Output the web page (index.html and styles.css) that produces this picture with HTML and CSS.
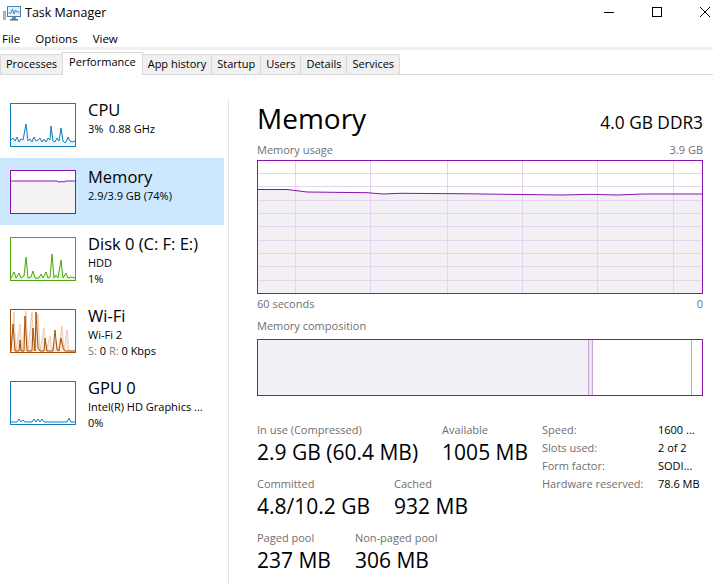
FILE: index.html
```html
<!DOCTYPE html>
<html>
<head>
<meta charset="utf-8">
<title>Task Manager</title>
<link rel="stylesheet" href="styles.css">
</head>
<body>
<div class="window">
  <div class="titlebar">
    <svg class="app-icon" width="18" height="16" viewBox="0 0 18 16">
      <rect x="0.5" y="6.5" width="2" height="8" fill="#b9b9b9" stroke="#8a8a8a" stroke-width="0.6"/>
      <rect x="4.5" y="1.5" width="13" height="10" fill="#e6f2fb" stroke="#4a7fb0"/>
      <polyline points="5.5,8 8,8 9.5,4 11,9 12.5,5 14,7 16.5,7" fill="none" stroke="#2a8ad0" stroke-width="1"/>
      <rect x="9" y="12" width="4" height="2" fill="#7d8a96"/>
      <rect x="7" y="14" width="8" height="1.5" fill="#5a6b7a"/>
    </svg>
    <span class="title">Task Manager</span>
    <div class="controls">
      <span class="ctl"><svg width="12" height="12" viewBox="0 0 12 12"><line x1="1" y1="6.5" x2="11" y2="6.5" stroke="#000" stroke-width="1"/></svg></span>
      <span class="ctl"><svg width="12" height="12" viewBox="0 0 12 12"><rect x="1.5" y="1.5" width="9" height="9" fill="none" stroke="#000" stroke-width="1"/></svg></span>
      <span class="ctl"><svg width="12" height="12" viewBox="0 0 12 12"><path d="M1 1 L11 11 M11 1 L1 11" stroke="#000" stroke-width="1"/></svg></span>
    </div>
  </div>
  <div class="menubar">
    <span class="menu-item">File</span>
    <span class="menu-item">Options</span>
    <span class="menu-item">View</span>
  </div>
  <div class="band"></div>
  <div class="tabs">
    <span class="tab">Processes</span>
    <span class="tab tab-active">Performance</span>
    <span class="tab">App history</span>
    <span class="tab">Startup</span>
    <span class="tab">Users</span>
    <span class="tab">Details</span>
    <span class="tab">Services</span>
  </div>
  <div class="main">
    <div class="sidebar">
      <div class="item">
        <div class="thumb thumb-cpu">
          <svg width="64" height="42" viewBox="0 0 64 42">
            <polygon fill="#f1f6fa" points="0,36 2,34 4,37 6,33 8,38 10,35 12,36 15,20 17,37 19,35 21,38 23,33 25,37 27,36 29,34 31,38 33,35 35,38 37,34 39,36 40,22 42,37 44,38 46,34 48,37 50,24 52,37 54,39 56,36 57,33 59,37 61,38 64,37 64,42 0,42"/>
            <polyline fill="none" stroke="#117dbb" stroke-width="1" points="0,36 2,34 4,37 6,33 8,38 10,35 12,36 15,20 17,37 19,35 21,38 23,33 25,37 27,36 29,34 31,38 33,35 35,38 37,34 39,36 40,22 42,37 44,38 46,34 48,37 50,24 52,37 54,39 56,36 57,33 59,37 61,38 64,37"/>
          </svg>
        </div>
        <div class="item-text">
          <div class="item-title">CPU</div>
          <div class="item-sub">3%&nbsp; 0.88 GHz</div>
        </div>
      </div>
      <div class="item item-active">
        <div class="thumb thumb-mem">
          <svg width="64" height="42" viewBox="0 0 64 42">
            <polygon fill="#f4f2f5" points="0,10 46,10 48,11 51,10.5 53,11 55,10 64,10 64,42 0,42"/>
            <polyline fill="none" stroke="#8b12ae" stroke-width="1" points="0,10 46,10 48,11 51,10.5 53,11 55,10 64,10"/>
          </svg>
        </div>
        <div class="item-text">
          <div class="item-title">Memory</div>
          <div class="item-sub">2.9/3.9 GB (74%)</div>
        </div>
      </div>
      <div class="item">
        <div class="thumb thumb-disk">
          <svg width="64" height="42" viewBox="0 0 64 42">
            <polygon fill="#eff7ea" points="0,40 3,34 5,40 8,35 10,40 13,38 15,19 17,40 20,39 22,33 24,40 28,40 30,36 32,40 35,34 37,40 39,39 41,16 43,40 45,37 47,40 50,22 52,40 55,35 57,40 60,39 64,40 64,42 0,42"/>
            <polyline fill="none" stroke="#4da60c" stroke-width="1" points="0,40 3,34 5,40 8,35 10,40 13,38 15,19 17,40 20,39 22,33 24,40 28,40 30,36 32,40 35,34 37,40 39,39 41,16 43,40 45,37 47,40 50,22 52,40 55,35 57,40 60,39 64,40"/>
          </svg>
        </div>
        <div class="item-text">
          <div class="item-title">Disk 0 (C: F: E:)</div>
          <div class="item-sub">HDD</div>
          <div class="item-sub">1%</div>
        </div>
      </div>
      <div class="item">
        <div class="thumb thumb-wifi">
          <svg width="64" height="42" viewBox="0 0 64 42">
            <polygon fill="#f9ebe0" points="0,41 3,2 5,41 9,14 11,41 15,1 17,41 21,2 23,41 27,4 29,41 33,18 35,41 39,26 41,41 45,30 47,41 51,16 53,41 56,20 58,41 64,41 64,42 0,42"/>
            <polyline fill="none" stroke="#e0a57c" stroke-width="1" stroke-dasharray="1 1" points="0,41 3,2 5,41 9,14 11,41 15,1 17,41 21,2 23,41 27,4 29,41 33,18 35,41 39,26 41,41 45,30 47,41 51,16 53,41 56,20 58,41 64,41"/>
            <polyline fill="none" stroke="#a74f01" stroke-width="1" points="0,41 2,14 4,41 8,41 9,30 10,41 13,41 14,6 16,41 21,41 22,18 24,41 25,2 27,38 29,41 33,41 34,28 36,41 42,41 44,20 46,40 48,41 50,28 52,38 54,41 64,41"/>
          </svg>
        </div>
        <div class="item-text">
          <div class="item-title">Wi-Fi</div>
          <div class="item-sub">Wi-Fi 2</div>
          <div class="item-sub"><span class="dim">S:</span> 0 <span class="dim">R:</span> 0 Kbps</div>
        </div>
      </div>
      <div class="item">
        <div class="thumb thumb-gpu">
          <svg width="64" height="42" viewBox="0 0 64 42">
            <polyline fill="none" stroke="#117dbb" stroke-width="1" points="0,40 6,40 8,37 10,40 12,38 14,40 21,40 23,37 25,40 27,37 29,40 31,37 33,40 56,40 58,36 60,40 64,40"/>
          </svg>
        </div>
        <div class="item-text">
          <div class="item-title">GPU 0</div>
          <div class="item-sub">Intel(R) HD Graphics ...</div>
          <div class="item-sub">0%</div>
        </div>
      </div>
    </div>
    <div class="divider"></div>
    <div class="panel">
      <div class="panel-head">
        <span class="panel-title">Memory</span>
        <span class="panel-spec">4.0 GB DDR3</span>
      </div>
      <div class="caption-row">
        <span>Memory usage</span>
        <span>3.9 GB</span>
      </div>
      <svg class="usage-graph" width="446" height="134" viewBox="0 0 446 134" shape-rendering="crispEdges">
        <rect x="0" y="0" width="446" height="134" fill="#ffffff"/>
        <polygon fill="#f2f0f4" shape-rendering="auto" points="0,29.5 30,29.5 50,32 110,32.7 126,34 143,33.3 200,33.7 306,35 333,34.3 360,35 386,34 446,34 446,134 0,134"/>
        <g stroke="#e6d3ef" stroke-width="1">
          <line x1="38.5" y1="0" x2="38.5" y2="134"/>
          <line x1="113.5" y1="0" x2="113.5" y2="134"/>
          <line x1="190.5" y1="0" x2="190.5" y2="134"/>
          <line x1="265.5" y1="0" x2="265.5" y2="134"/>
          <line x1="340.5" y1="0" x2="340.5" y2="134"/>
          <line x1="416.5" y1="0" x2="416.5" y2="134"/>
          <line x1="0" y1="13.5" x2="446" y2="13.5"/>
          <line x1="0" y1="26.5" x2="446" y2="26.5"/>
          <line x1="0" y1="40.5" x2="446" y2="40.5"/>
          <line x1="0" y1="53.5" x2="446" y2="53.5"/>
          <line x1="0" y1="66.5" x2="446" y2="66.5"/>
          <line x1="0" y1="80.5" x2="446" y2="80.5"/>
          <line x1="0" y1="93.5" x2="446" y2="93.5"/>
          <line x1="0" y1="106.5" x2="446" y2="106.5"/>
          <line x1="0" y1="120.5" x2="446" y2="120.5"/>
        </g>
        <polyline fill="none" stroke="#8b12ae" stroke-width="1" shape-rendering="auto" points="0,29.5 30,29.5 50,32 110,32.7 126,34 143,33.3 200,33.7 306,35 333,34.3 360,35 386,34 446,34"/>
        <rect x="0.5" y="0.5" width="445" height="133" fill="none" stroke="#8b12ae" stroke-width="1"/>
      </svg>
      <div class="caption-row caption-axis">
        <span>60 seconds</span>
        <span>0</span>
      </div>
      <div class="caption-row caption-comp">
        <span>Memory composition</span>
      </div>
      <div class="composition">
        <div class="seg seg-inuse" style="width:74.3%"></div>
        <div class="seg seg-modified" style="width:1.2%"></div>
        <div class="seg seg-standby" style="width:22.3%"></div>
        <div class="seg seg-free"></div>
      </div>
      <div class="stats">
        <div class="stats-left">
          <div class="stat-row">
            <div class="stat"><div class="stat-label">In use (Compressed)</div><div class="stat-value">2.9 GB (60.4 MB)</div></div>
            <div class="stat"><div class="stat-label">Available</div><div class="stat-value">1005 MB</div></div>
          </div>
          <div class="stat-row">
            <div class="stat"><div class="stat-label">Committed</div><div class="stat-value">4.8/10.2 GB</div></div>
            <div class="stat"><div class="stat-label">Cached</div><div class="stat-value">932 MB</div></div>
          </div>
          <div class="stat-row">
            <div class="stat"><div class="stat-label">Paged pool</div><div class="stat-value">237 MB</div></div>
            <div class="stat"><div class="stat-label">Non-paged pool</div><div class="stat-value">306 MB</div></div>
          </div>
        </div>
        <div class="stats-right">
          <span class="kv-key">Speed:</span><span class="kv-val">1600 ...</span>
          <span class="kv-key">Slots used:</span><span class="kv-val">2 of 2</span>
          <span class="kv-key">Form factor:</span><span class="kv-val">SODI...</span>
          <span class="kv-key">Hardware reserved:</span><span class="kv-val">78.6 MB</span>
        </div>
      </div>
    </div>
  </div>
</div>
</body>
</html>
```

FILE: styles.css
```css
html, body {
  margin: 0;
  padding: 0;
  background: #ffffff;
}
body {
  font-family: "Segoe UI", "Open Sans", "Noto Sans", sans-serif;
  color: #000000;
  width: 713px;
  height: 585px;
  overflow: hidden;
}
.window {
  width: 713px;
  height: 585px;
  overflow: hidden;
  display: flex;
  flex-direction: column;
}
.titlebar {
  height: 26px;
  display: flex;
  align-items: center;
  flex-shrink: 0;
}
.app-icon {
  margin-left: 3px;
  margin-right: 4px;
  display: block;
}
.title {
  font-size: 12.5px;
  line-height: 16px;
  padding-bottom: 1px;
}
.controls {
  margin-left: auto;
  margin-right: -16px;
  display: flex;
}
.ctl {
  width: 48px;
  height: 26px;
  display: flex;
  align-items: center;
  justify-content: center;
}
.ctl svg { display: block; margin-top: -2px; }
.menubar {
  height: 21px;
  display: flex;
  gap: 15px;
  padding-left: 2px;
  font-size: 11.5px;
  line-height: 16px;
  padding-top: 5px;
  box-sizing: border-box;
  flex-shrink: 0;
}
.band {
  height: 3px;
  background: #f0f0f0;
  flex-shrink: 0;
}
.tabs {
  height: 25px;
  box-sizing: border-box;
  padding-top: 2px;
  display: flex;
  align-items: flex-end;
  border-bottom: 1px solid #d9d9d9;
  flex-shrink: 0;
}
.tab {
  height: 20px;
  box-sizing: border-box;
  border: 1px solid #d9d9d9;
  border-bottom: 0;
  margin-right: -1px;
  background: #f0f0f0;
  font-size: 11px;
  line-height: 18px;
  padding: 0 5px;
  white-space: nowrap;
}
.tab-active {
  height: 23px;
  margin-bottom: -1px;
  background: #ffffff;
  position: relative;
  padding: 0 6px 4px;
}
.main {
  flex: 1;
  display: flex;
  min-height: 0;
}
.sidebar {
  width: 224px;
  padding-top: 16px;
  padding-right: 4px;
  flex-shrink: 0;
}
.item {
  display: flex;
  align-items: flex-start;
  padding: 12px 0 11px 10px;
}
.item-active {
  background: #cce8ff;
}
.thumb {
  width: 66px;
  height: 44px;
  box-sizing: border-box;
  border: 1px solid;
  background: #ffffff;
  flex-shrink: 0;
}
.thumb svg { display: block; }
.thumb-cpu { border-color: #117dbb; }
.thumb-mem { border-color: #8b12ae; }
.thumb-disk { border-color: #4da60c; }
.thumb-wifi { border-color: #a74f01; }
.thumb-gpu { border-color: #117dbb; }
.item-text {
  margin-left: 12px;
  margin-top: -4px;
  white-space: nowrap;
}
.item-title {
  font-size: 16.5px;
  line-height: 22px;
}
.item-sub {
  font-size: 11px;
  line-height: 15.5px;
}
.dim { color: #7a7a7a; }
.divider {
  width: 1px;
  background: #e3e3e3;
  margin-top: 25px;
  flex-shrink: 0;
}
.panel {
  flex: 1;
  padding: 26px 10px 0 28px;
  min-width: 0;
}
.panel-head {
  display: flex;
  justify-content: space-between;
  align-items: baseline;
  height: 34px;
}
.panel-title {
  font-size: 28px;
  line-height: 34px;
}
.panel-spec {
  font-size: 17.3px;
  line-height: 22px;
}
.caption-row {
  display: flex;
  justify-content: space-between;
  font-size: 11px;
  line-height: 16px;
  color: #707070;
  margin-top: 7px;
}
.usage-graph {
  display: block;
  margin-top: 2px;
}
.caption-axis { margin-top: 2px; }
.caption-comp { margin-top: 6px; }
.composition {
  margin-top: 5px;
  height: 57px;
  box-sizing: border-box;
  border: 1px solid #8b12ae;
  display: flex;
}
.seg { height: 100%; box-sizing: border-box; }
.seg-inuse { background: #f2f0f4; }
.seg-modified {
  background: #ece2f1;
  border-left: 1px solid #c9a6d9;
  border-right: 1px solid #c9a6d9;
}
.seg-standby { background: #ffffff; border-right: 1px solid #c9a6d9; }
.seg-free { flex: 1; background: #ffffff; }
.stats {
  display: flex;
  margin-top: 26px;
}
.stats-left {
  width: 285px;
  flex-shrink: 0;
}
.stat-row {
  display: flex;
  gap: 24px;
  margin-bottom: 10px;
}
.stat { white-space: nowrap; }
.stat-label {
  font-size: 11px;
  line-height: 16px;
  color: #707070;
}
.stat-value {
  font-size: 21px;
  line-height: 28px;
}
.stats-right {
  display: grid;
  grid-template-columns: 116px auto;
  grid-auto-rows: 18px;
  font-size: 11px;
  line-height: 18px;
  margin-top: -1px;
  white-space: nowrap;
}
.kv-key { color: #707070; }
```
